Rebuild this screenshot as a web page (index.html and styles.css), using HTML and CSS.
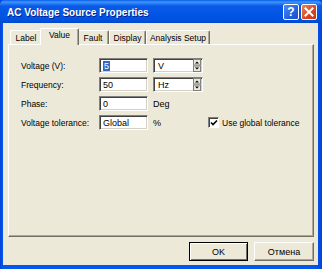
FILE: index.html
```html
<!DOCTYPE html>
<html lang="en">
<head>
  <meta charset="UTF-8">
  <title>AC Voltage Source Properties</title>
  <link rel="stylesheet" href="styles.css">
</head>
<body>
  <div class="window">
    <!-- title bar -->
    <div class="titlebar">
      <span class="title">AC Voltage Source Properties</span>
      <div class="caption-buttons">
        <div class="cap-btn help">?</div>
        <div class="cap-btn close">
          <svg width="10" height="10" viewBox="0 0 10 10">
            <path d="M1.5 1.5 L8.5 8.5 M8.5 1.5 L1.5 8.5" stroke="#fff" stroke-width="2" stroke-linecap="square"/>
          </svg>
        </div>
      </div>
    </div>

    <div class="client">
      <div class="tabs">
        <div class="tab tab-label">Label</div>
        <div class="tab tab-value active">Value</div>
        <div class="tab tab-fault">Fault</div>
        <div class="tab tab-display">Display</div>
        <div class="tab tab-analysis">Analysis Setup</div>
      </div>

      <div class="panel">
        <div class="form">
          <label>Voltage (V):</label>
          <div class="field"><span class="sel">5</span></div>
          <div class="combo">
            <span>V</span>
            <svg class="spin" width="8" height="13" viewBox="0 0 8 13">
              <rect x="0.5" y="0.5" width="7" height="5.5" fill="#ece9d8" stroke="#808080"/>
              <rect x="0.5" y="7" width="7" height="5.5" fill="#ece9d8" stroke="#808080"/>
              <path d="M2 4.5 L4 2.5 L6 4.5 Z" fill="#000"/>
              <path d="M2 8.5 L4 10.5 L6 8.5 Z" fill="#000"/>
            </svg>
          </div>
          <div></div>

          <label>Frequency:</label>
          <div class="field">50</div>
          <div class="combo">
            <span>Hz</span>
            <svg class="spin" width="8" height="13" viewBox="0 0 8 13">
              <rect x="0.5" y="0.5" width="7" height="5.5" fill="#ece9d8" stroke="#808080"/>
              <rect x="0.5" y="7" width="7" height="5.5" fill="#ece9d8" stroke="#808080"/>
              <path d="M2 4.5 L4 2.5 L6 4.5 Z" fill="#000"/>
              <path d="M2 8.5 L4 10.5 L6 8.5 Z" fill="#000"/>
            </svg>
          </div>
          <div></div>

          <label>Phase:</label>
          <div class="field">0</div>
          <div class="unit">Deg</div>
          <div></div>

          <label>Voltage tolerance:</label>
          <div class="field">Global</div>
          <div class="unit">%</div>
          <div class="check">
            <span class="box">
              <svg width="8" height="8" viewBox="0 0 8 8">
                <path d="M1 3.5 L3 5.5 L7 1.5" fill="none" stroke="#000" stroke-width="1.6"/>
              </svg>
            </span>
            Use global tolerance
          </div>
        </div>
      </div>

      <div class="buttons">
        <button class="btn default">OK</button>
        <button class="btn">Отмена</button>
      </div>
    </div>
  </div>
</body>
</html>
```

FILE: styles.css
```css
body {
  margin: 0;
  background: #ece9d8;
  font-family: "Liberation Sans", Arial, sans-serif;
  font-size: 8.5px;
  color: #000;
}
.window {
  width: 322px;
  height: 269px;
  box-sizing: border-box;
  padding: 0 4px 4px 3px;
  background: linear-gradient(90deg, #0842d6, #0058ee 3px, #0058ee 315px, #0842d6);
  display: flex;
  flex-direction: column;
}
.titlebar {
  height: 23px;
  margin: 0 -4px 0 -3px;
  padding: 0 5px 0 7px;
  display: flex;
  align-items: center;
  justify-content: space-between;
  background: linear-gradient(#0a5fe8 0, #3d95ff 2px, #0a5ae6 6px, #0055e5 16px, #0050dc 21px, #0046c8 23px);
  border-radius: 5px 5px 0 0;
}
.title {
  color: #fff;
  font-weight: bold;
  font-size: 10px;
  text-shadow: 1px 1px 0 #0a1e8a;
  margin-top: 1px;
}
.caption-buttons {
  display: flex;
  gap: 2px;
  margin-top: 1px;
}
.cap-btn {
  width: 14px;
  height: 14px;
  border: 1px solid #fff;
  border-radius: 2px;
  display: flex;
  align-items: center;
  justify-content: center;
  color: #fff;
  font-weight: bold;
  font-size: 12px;
}
.help {
  background: linear-gradient(135deg, #4f8cf7, #2461e0 60%, #1c4fc7);
}
.close {
  background: linear-gradient(135deg, #e8845c, #d8461f 60%, #c23a18);
}
.client {
  flex: 1;
  background: #ece9d8;
  padding: 5px 4px 4px 5px;
  display: flex;
  flex-direction: column;
}
.tabs {
  height: 16px;
  display: flex;
  align-items: flex-end;
  padding-left: 2px;
}
.tab {
  height: 14px;
  box-sizing: border-box;
  border-top: 1px solid #fff;
  border-left: 1px solid #fff;
  border-right: 1px solid #716f64;
  border-radius: 2px 2px 0 0;
  box-shadow: inset -1px 0 0 #aca899;
  text-align: center;
  line-height: 13px;
  padding-top: 1px;
  background: #ece9d8;
}
.tab-label { width: 32px; }
.tab-value { width: 35px; }
.tab-fault { width: 32px; }
.tab-display { width: 37px; }
.tab-analysis { width: 64px; }
.tab.active {
  height: 17px;
  width: 39px;
  margin: 0 -2px -1px;
  position: relative;
  z-index: 1;
  padding-top: 0;
  line-height: 13px;
}
.panel {
  flex: 1;
  border: 1px solid;
  border-color: #fff #716f64 #716f64 #fff;
  box-shadow: inset -1px -1px 0 #aca899;
  padding: 13px 0 0 12px;
}
.form {
  display: grid;
  grid-template-columns: 73px 49px 50px auto;
  grid-auto-rows: 15px;
  column-gap: 5px;
  row-gap: 4px;
  align-items: center;
}
.form label {
  grid-column: 1;
  margin-right: -5px;
}
.field,
.combo {
  height: 15px;
  box-sizing: border-box;
  border: 1px solid;
  border-color: #808080 #fff #fff #808080;
  box-shadow: inset 1px 1px 0 #404040, inset -1px -1px 0 #d4d0c8;
  background: #fff;
  padding: 2px 0 0 3px;
  line-height: 10px;
  font-size: 9px;
}
.combo {
  display: flex;
  justify-content: space-between;
  padding: 0 1px 0 3px;
  align-items: center;
}
.combo span {
  margin-left: 1px;
}
.sel {
  background: #316ac5;
  color: #fff;
  padding: 0 1px;
}
.unit {
  font-size: 9px;
}
.check {
  display: flex;
  align-items: center;
  gap: 3px;
  white-space: nowrap;
  font-size: 8.5px;
}
.box {
  width: 9px;
  height: 9px;
  border: 1px solid;
  border-color: #808080 #fff #fff #808080;
  box-shadow: inset 1px 1px 0 #404040;
  background: #fff;
  display: flex;
  align-items: center;
  justify-content: center;
}
.buttons {
  margin-top: 5px;
  height: 19px;
  display: flex;
  justify-content: flex-end;
  gap: 6px;
}
.btn {
  width: 60px;
  height: 19px;
  padding: 0;
  background: #ece9d8;
  border: 1px solid;
  border-color: #fff #716f64 #716f64 #fff;
  box-shadow: inset -1px -1px 0 #aca899;
  font-family: "Liberation Sans", Arial, sans-serif;
  font-size: 9px;
  color: #000;
}
.btn.default {
  width: 59px;
  border: 1px solid #000;
  box-shadow: inset 1px 1px 0 #fff, inset -1px -1px 0 #716f64;
}
```
